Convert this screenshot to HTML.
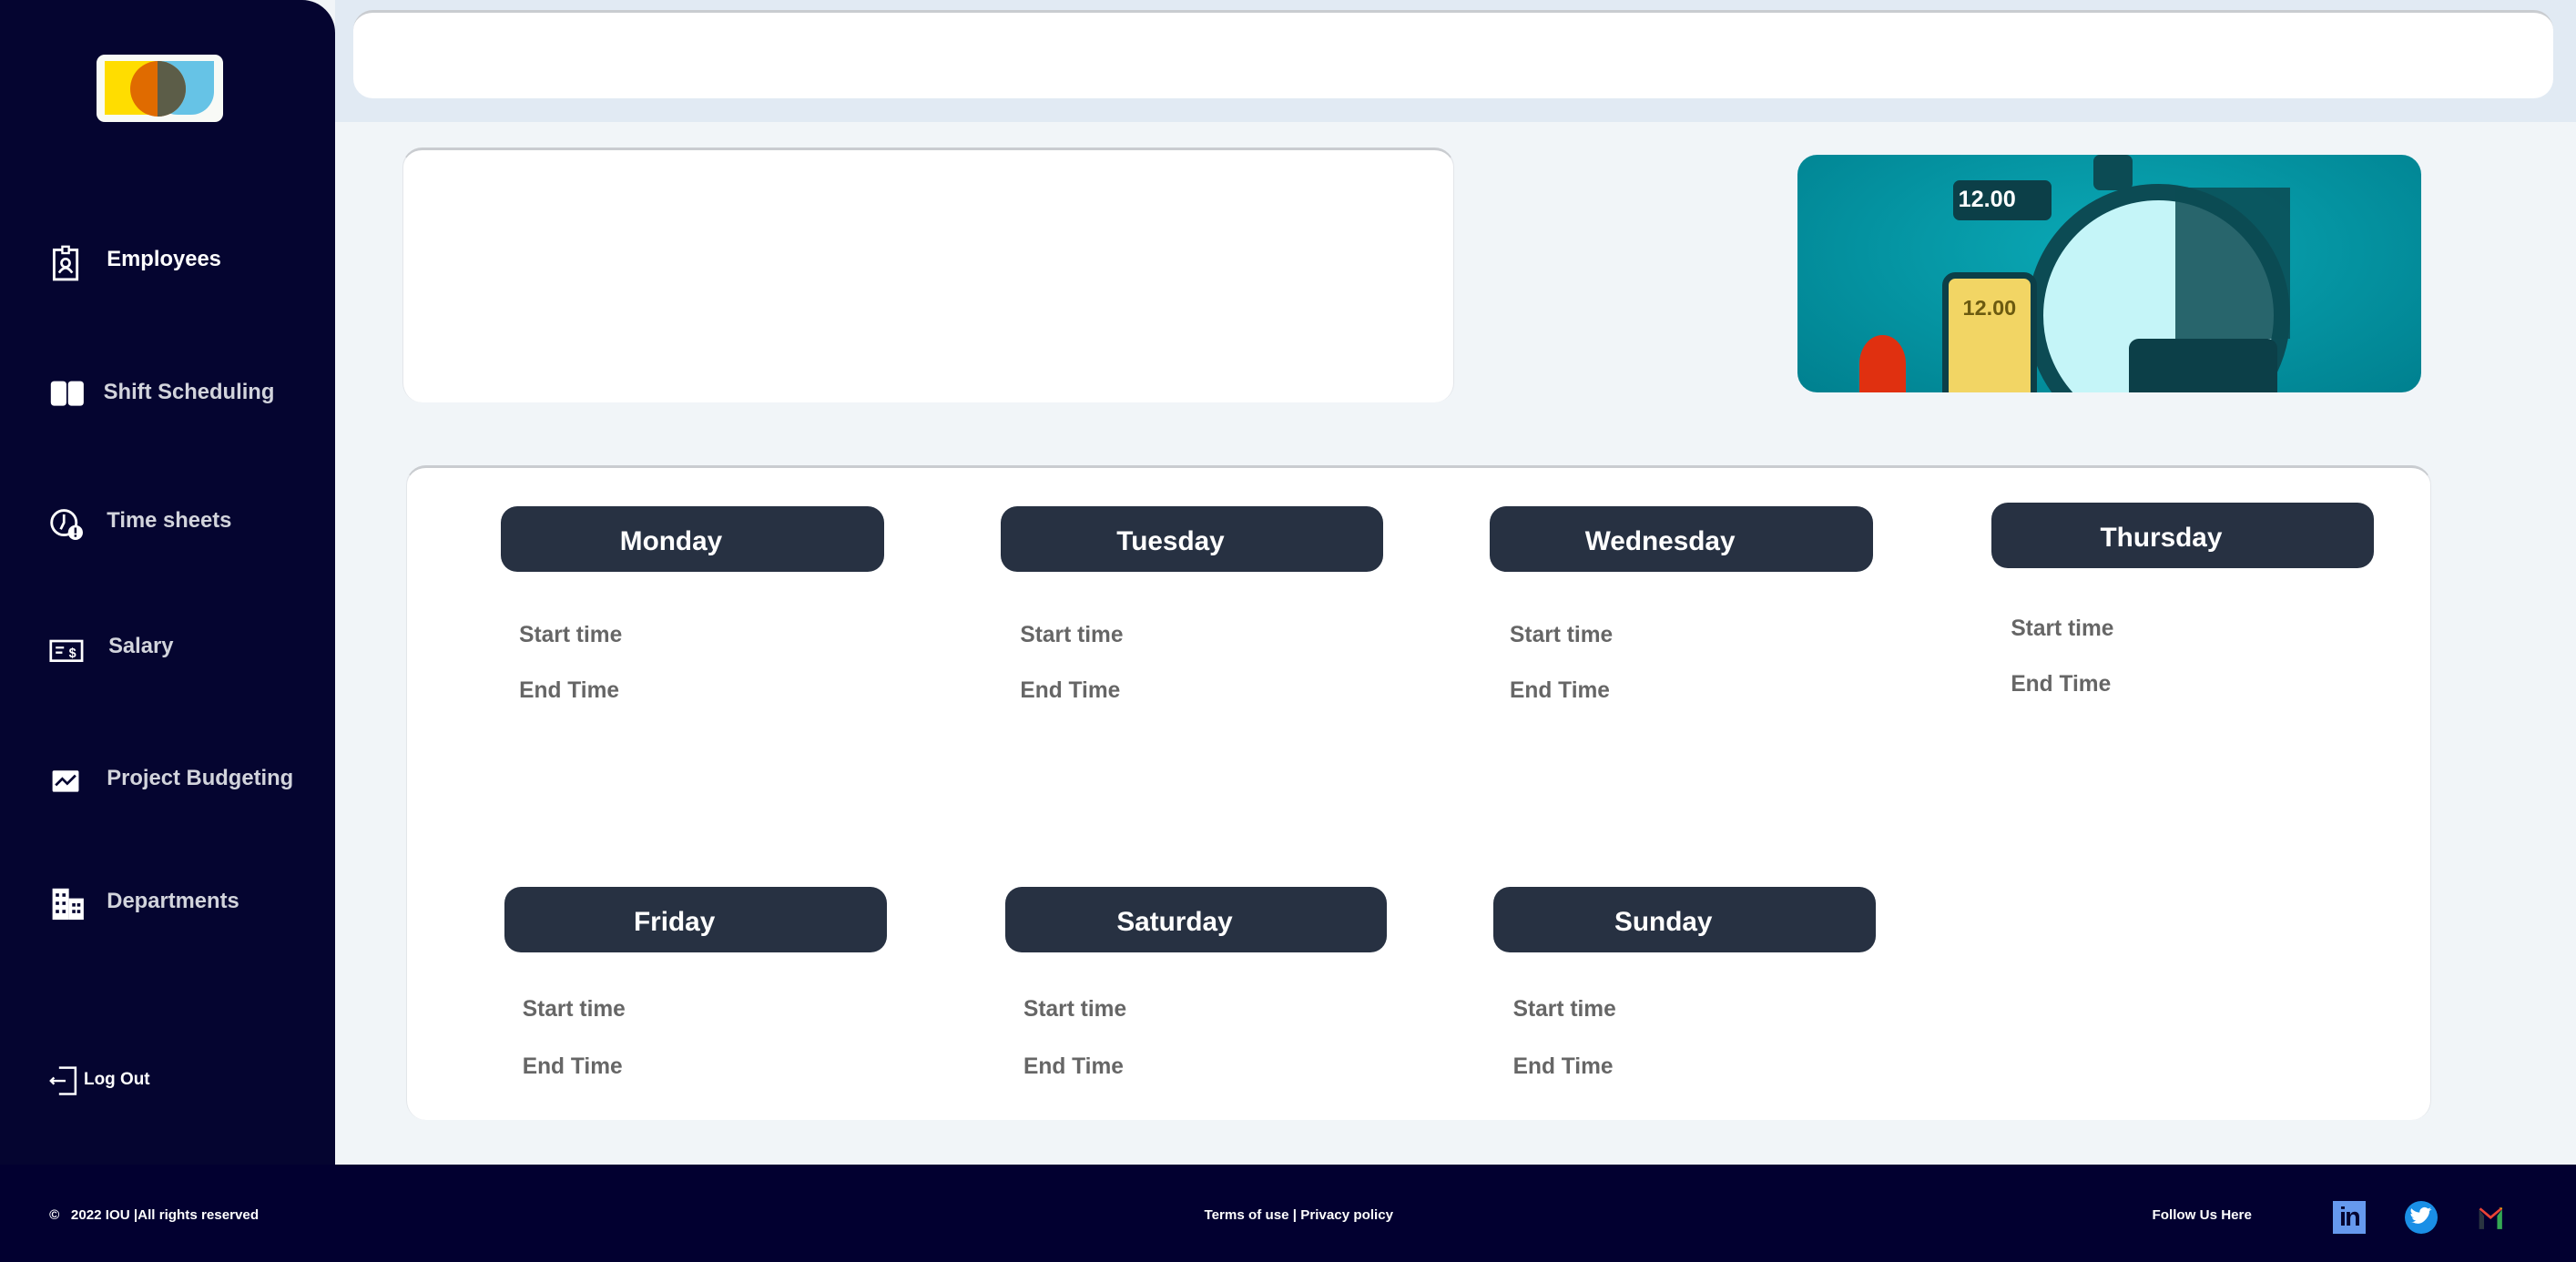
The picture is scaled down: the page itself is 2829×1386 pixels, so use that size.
<!DOCTYPE html>
<html><head><meta charset="utf-8"><style>
*{margin:0;padding:0;box-sizing:border-box}
html,body{width:2829px;height:1386px;overflow:hidden;background:#f1f5f8}
#r{zoom:1.8042;width:1568px;height:768px;position:relative;font-family:"Liberation Sans",sans-serif}
.a{position:absolute}
.side{left:0;top:0;width:204px;height:710px;background:#050530;border-top-right-radius:20px}
.nav{position:absolute;left:0;font-weight:bold;font-size:13.2px;color:#d2d4dc}
.nav svg{position:absolute;left:30px;top:-9px}
.nav span{position:absolute;white-space:nowrap}
.day{position:absolute;width:233px;height:40px;background:#273142;border-radius:10px;color:#fff;font-size:16.5px;font-weight:bold;text-align:center;line-height:43px;padding-right:26px}
.st{position:absolute;color:#666;font-size:13.6px;font-weight:bold}
.foot{left:0;top:709px;width:1568px;height:59px;background:#020030;color:#fff;font-size:8.4px;font-weight:bold}
</style></head><body><div id="r">
<div class="a" style="left:204px;top:0;width:1364px;height:74px;background:#e1eaf3"></div>
<div class="a" style="left:215px;top:6px;width:1339px;height:54px;background:#fff;border-radius:12px;border-top:2px solid #c9ccd0"></div>
<div class="a" style="left:245px;top:90px;width:640px;height:155px;background:#fff;border-radius:12px;border-top:2px solid #c9ccd0;border-left:1px solid #e3e6ea;border-right:1px solid #e3e6ea"></div>
<div class="a" style="left:1094px;top:94px;width:380px;height:145px;border-radius:12px;background:radial-gradient(ellipse at 50% 40%,#0aa9b6,#00808f);overflow:hidden">
<div class="a" style="left:140px;top:18px;width:160px;height:160px;border-radius:50%;background:#c5f5f8;border:10px solid #0c4b54"></div>
<div class="a" style="left:180px;top:0;width:24px;height:22px;background:#0c4b54;border-radius:4px"></div>
<div class="a" style="left:95px;top:16px;width:60px;height:24px;background:#0c3f48;border-radius:4px;color:#fff;font-weight:bold;font-size:14px;line-height:24px;padding-left:3px">12.00</div>
<div class="a" style="left:88px;top:72px;width:58px;height:80px;background:#f2d564;border:4px solid #0c3f48;border-radius:8px;color:#6b5a10;font-weight:bold;font-size:13px;text-align:center;padding-top:10px">12.00</div>
<div class="a" style="left:230px;top:20px;width:70px;height:92px;background:#0c4b54;opacity:.85"></div>
<div class="a" style="left:202px;top:112px;width:90px;height:40px;background:#0c3f48;border-radius:6px"></div>
<div class="a" style="left:38px;top:110px;width:28px;height:35px;background:#e03010;border-radius:50% 50% 0 0"></div>
</div>
<div class="a" style="left:247px;top:283px;width:1233px;height:399px;background:#fff;border-radius:12px;border-top:2px solid #c9ccd0;border-left:1px solid #e3e6ea;border-right:1px solid #e3e6ea"></div>
<div class="day" style="left:305px;top:308px">Monday</div>
<div class="day" style="left:609px;top:308px">Tuesday</div>
<div class="day" style="left:907px;top:308px">Wednesday</div>
<div class="day" style="left:1212px;top:306px">Thursday</div>
<div class="day" style="left:307px;top:540px">Friday</div>
<div class="day" style="left:612px;top:540px;width:232px">Saturday</div>
<div class="day" style="left:909px;top:540px">Sunday</div>
<div class="st" style="left:316px;top:379px">Start time</div><div class="st" style="left:316px;top:413px">End Time</div>
<div class="st" style="left:621px;top:379px">Start time</div><div class="st" style="left:621px;top:413px">End Time</div>
<div class="st" style="left:919px;top:379px">Start time</div><div class="st" style="left:919px;top:413px">End Time</div>
<div class="st" style="left:1224px;top:375px">Start time</div><div class="st" style="left:1224px;top:409px">End Time</div>
<div class="st" style="left:318px;top:607px">Start time</div><div class="st" style="left:318px;top:642px">End Time</div>
<div class="st" style="left:623px;top:607px">Start time</div><div class="st" style="left:623px;top:642px">End Time</div>
<div class="st" style="left:921px;top:607px">Start time</div><div class="st" style="left:921px;top:642px">End Time</div>

<div class="a side">
<div class="a" style="left:59px;top:33px;width:77px;height:41px;background:#f8faf6;border-radius:5px">
<div class="a" style="left:5px;top:4px;width:35px;height:33px;background:#ffdd00"></div>
<div class="a" style="left:35px;top:4px;width:36px;height:33px;background:#66c3e6;border-radius:0 0 14px 14px"></div>
<div class="a" style="left:20px;top:4px;width:34px;height:34px;background:#e06b00;border-radius:50%"></div>
<div class="a" style="left:37px;top:4px;width:17px;height:34px;background:#5c5d48;border-radius:0 17px 17px 0"></div>
</div>
<div class="nav" style="top:158px;color:#fff"><svg width="20" height="22" viewBox="0 0 20 22"><rect x="3" y="3" width="14" height="18" fill="none" stroke="#fff" stroke-width="1.6"/><rect x="8" y="1" width="4" height="4" fill="#050530" stroke="#fff" stroke-width="1.3"/><circle cx="10" cy="11" r="2.5" fill="none" stroke="#fff" stroke-width="1.5"/><path d="M6 17q4-6 8 0" fill="none" stroke="#fff" stroke-width="1.5"/></svg><span style="left:65px;top:-8px">Employees</span></div>
<div class="nav" style="top:239px"><svg width="22" height="20" viewBox="0 0 22 20"><rect x="1" y="2" width="9.5" height="15" rx="2" fill="#fff"/><rect x="11.5" y="2" width="9.5" height="15" rx="2" fill="#fff"/></svg><span style="left:63px;top:-8px">Shift Scheduling</span></div>
<div class="nav" style="top:317px"><svg width="22" height="22" viewBox="0 0 22 22"><circle cx="9" cy="10" r="7.5" fill="none" stroke="#fff" stroke-width="1.6"/><path d="M9 5v5l-2 4" fill="none" stroke="#fff" stroke-width="1.5"/><circle cx="16" cy="16" r="4.5" fill="#fff"/><rect x="15.3" y="13" width="1.4" height="3.5" fill="#050530"/><rect x="15.3" y="17.3" width="1.4" height="1.4" fill="#050530"/></svg><span style="left:65px;top:-8px">Time sheets</span></div>
<div class="nav" style="top:394px"><svg width="22" height="20" viewBox="0 0 22 20"><rect x="1" y="5" width="19" height="12" fill="none" stroke="#fff" stroke-width="1.5"/><path d="M4 9h5M4 12h4" stroke="#fff" stroke-width="1.3"/><text x="12" y="15" fill="#fff" font-size="8" font-weight="bold" font-family="Liberation Sans">$</text></svg><span style="left:66px;top:-8px">Salary</span></div>
<div class="nav" style="top:474px"><svg width="22" height="20" viewBox="0 0 22 20"><rect x="2" y="4" width="16" height="13" rx="1" fill="#fff"/><path d="M4 13l4-4 3 3 5-5" fill="none" stroke="#050530" stroke-width="1.5"/></svg><span style="left:65px;top:-8px">Project Budgeting</span></div>
<div class="nav" style="top:549px"><svg width="24" height="22" viewBox="0 0 24 22"><rect x="2" y="1" width="10" height="19" fill="#fff"/><rect x="12" y="7" width="9" height="13" fill="#fff"/><g fill="#050530"><rect x="4" y="4" width="2" height="2"/><rect x="8" y="4" width="2" height="2"/><rect x="4" y="9" width="2" height="2"/><rect x="8" y="9" width="2" height="2"/><rect x="4" y="14" width="2" height="2"/><rect x="8" y="14" width="2" height="2"/><rect x="14" y="10" width="2" height="2"/><rect x="17" y="10" width="2" height="2"/><rect x="14" y="14" width="2" height="2"/><rect x="17" y="14" width="2" height="2"/></g></svg><span style="left:65px;top:-8px">Departments</span></div>
<div class="nav" style="top:657px;font-size:10.5px;color:#fff"><svg width="18" height="20" viewBox="0 0 18 20"><path d="M6 2h10v16H6" fill="none" stroke="#fff" stroke-width="1.4"/><path d="M1 10h9M3 8l-2 2 2 2" fill="none" stroke="#fff" stroke-width="1.3"/></svg><span style="left:51px;top:-6px">Log Out</span></div>
</div>

<div class="a foot">
<span class="a" style="left:30px;top:26px">©&nbsp;&nbsp;&nbsp;2022 IOU |All rights reserved</span>
<span class="a" style="left:733px;top:26px">Terms of use | Privacy policy</span>
<span class="a" style="left:1310px;top:26px">Follow Us Here</span>
<div class="a" style="left:1420px;top:22px;width:20px;height:20px;background:#6699ee;color:#050530;font-size:16px;font-weight:bold;line-height:21px;text-align:center;letter-spacing:-1px">in</div>
<div class="a" style="left:1464px;top:22px;width:20px;height:20px;background:#1a8fe6;border-radius:50%"><svg width="20" height="20" viewBox="0 0 20 20"><path d="M5 13q4 2 7-1t3-6l1.5-1-1.7.3q1-.8 1-1.3-1 .6-1.8.6a3 3 0 0 0-5 2.4q-3-.2-5-2.5-1 2 .8 3.5l-1.2-.3q0 2 2 2.5h-1.2q.7 1.6 2.3 1.7-1.6 1.2-3.7 1" fill="#fff"/></svg></div>
<svg class="a" style="left:1507px;top:23px" width="18" height="18" viewBox="0 0 18 18"><path d="M2 4v12h3V8z" fill="#2a3440"/><path d="M13 8v8h3V4z" fill="#34a853"/><path d="M2 4l7 6 7-6-1-1-6 5-6-5z" fill="#ea4335"/><path d="M14 3l2 1v-1z" fill="#fbbc04"/></svg>
</div>
</div></body></html>
